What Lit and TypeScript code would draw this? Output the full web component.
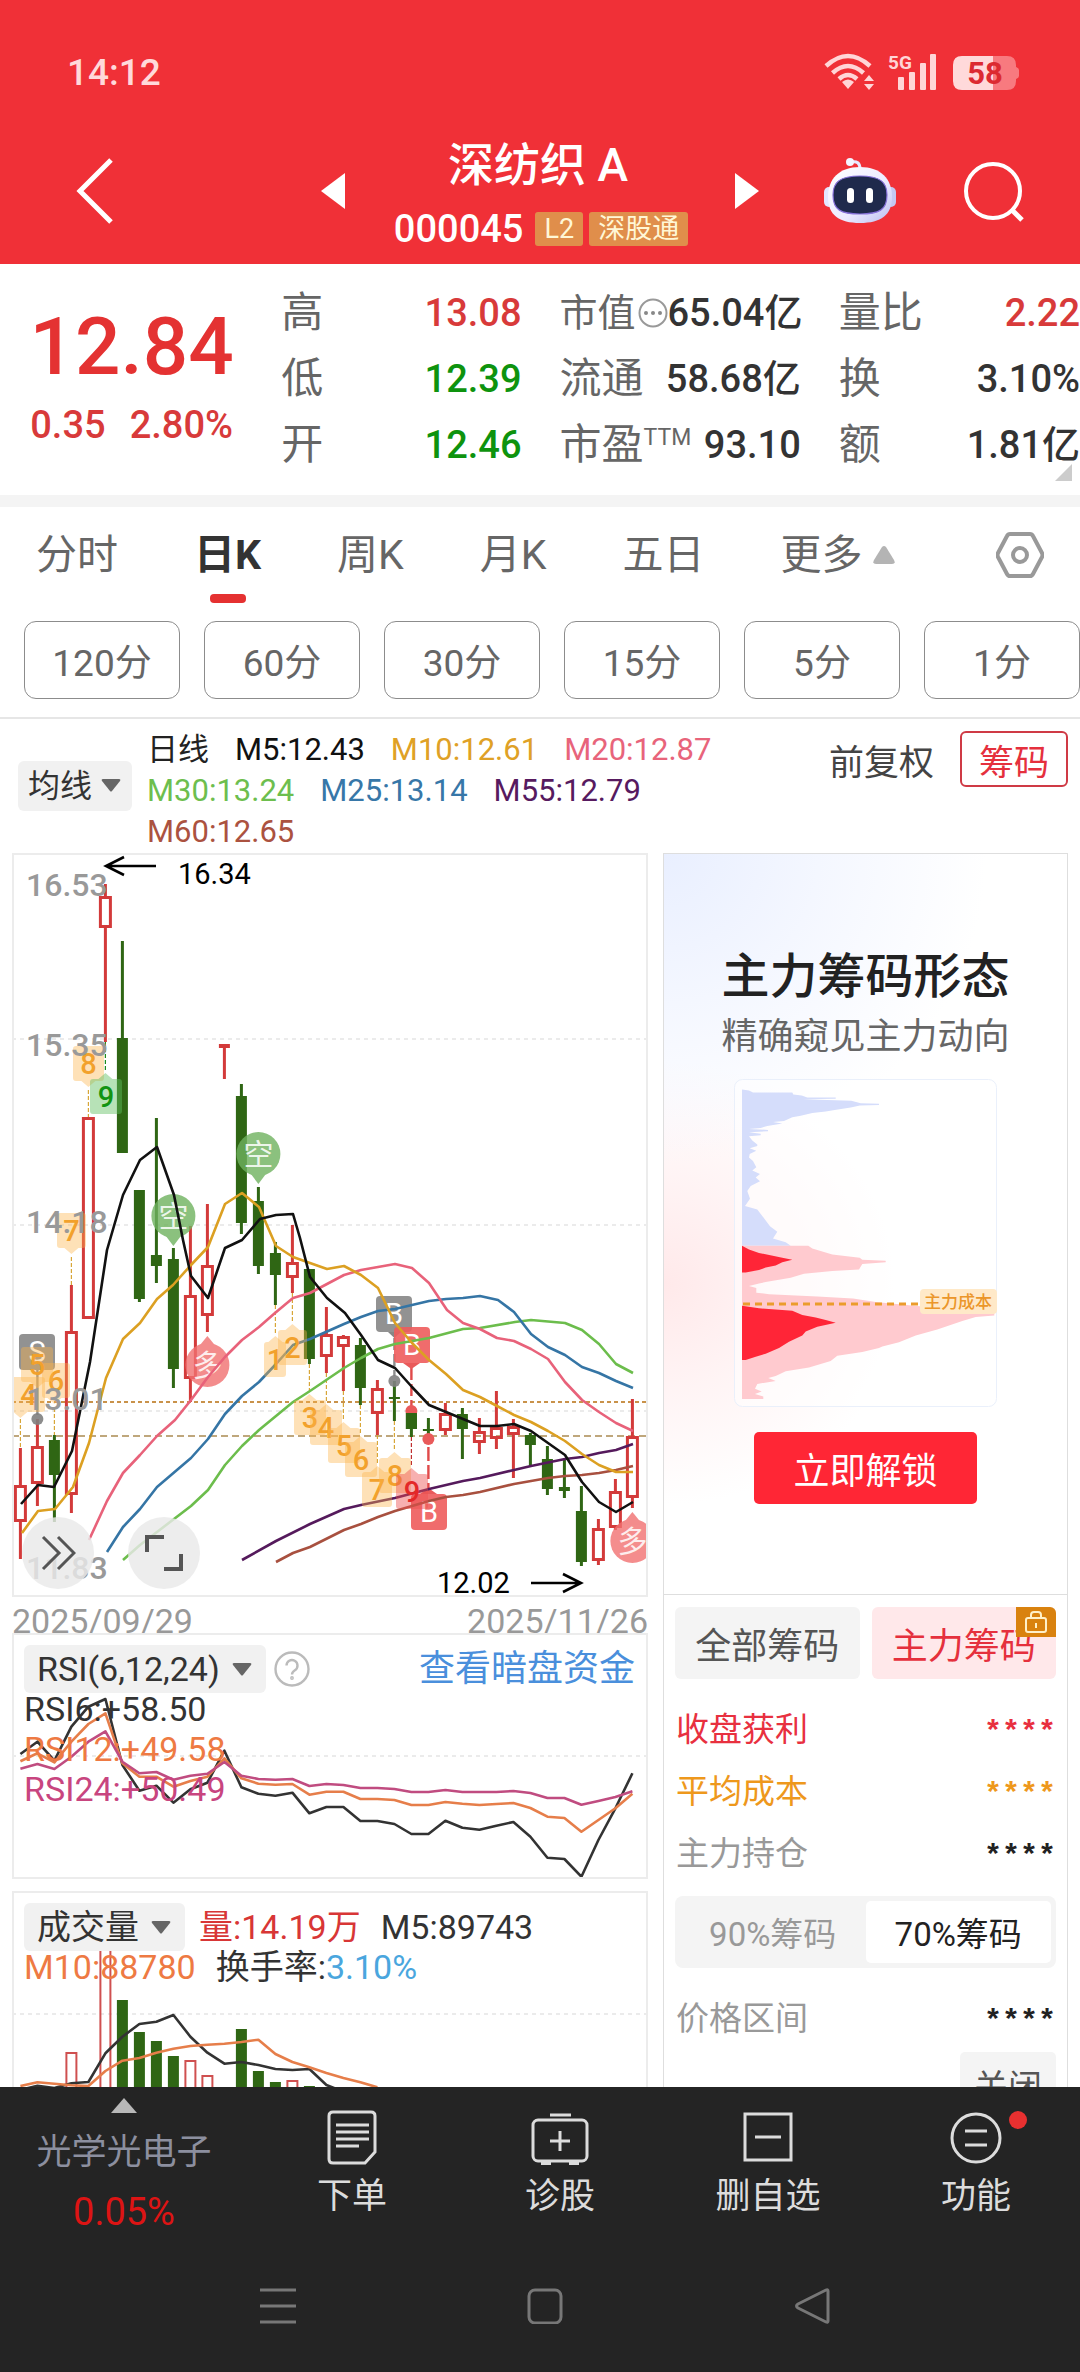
import { LitElement, html, svg, css } from "lit";
import { customElement, state } from "lit/decorators.js";
import { classMap } from "lit/directives/class-map.js";

const base = css`
  :host {
    display: block;
    font-family: Roboto, "Noto Sans CJK SC", sans-serif;
    color: #333;
  }
  * {
    box-sizing: border-box;
  }
  button,
  select {
    font: inherit;
    color: inherit;
    background: none;
    border: 0;
    padding: 0;
    margin: 0;
  }
  select {
    appearance: none;
  }
  svg {
    display: block;
  }
  .pill {
    position: relative;
    display: inline-flex;
    flex: none;
  }
  .pill select {
    height: 48px;
    padding: 0 46px 0 13px;
    border-radius: 6px;
    background: #f1f1f1;
    font-size: 34px;
    line-height: 48px;
    color: #333;
  }
  .pill svg {
    position: absolute;
    right: 14px;
    top: 18px;
    pointer-events: none;
  }
`;

const arrowDown = html`<svg width="20" height="13" viewBox="0 0 20 13" aria-hidden="true">
  <path d="M2 0H18Q20 0 19 2L11 12Q10 13 9 12L1 2Q0 0 2 0Z" fill="#666" />
</svg>`;

const STEP = 17;
const X0 = 20.4;
const RED = "#d33a3a";
const GREEN = "#2f6614";
const px = (i: number) => X0 + i * STEP;

/* u = rising (hollow red), d = falling (solid green): high, body top, body bottom, low */
type Candle = ["u" | "d", number, number, number, number];
const candles: Candle[] = [
  ["u", 1448, 1485, 1522, 1559], ["u", 1419, 1446, 1484, 1506], ["d", 1435, 1440, 1475, 1522],
  ["u", 1285, 1331, 1495, 1513], ["u", 1117, 1117, 1319, 1319], ["u", 884, 896, 928, 1042],
  ["d", 941, 1038, 1153, 1153], ["d", 1190, 1190, 1299, 1302], ["d", 1118, 1255, 1266, 1283],
  ["d", 1248, 1259, 1369, 1388], ["u", 1226, 1295, 1379, 1402], ["u", 1204, 1265, 1316, 1332],
  ["u", 1045, 1044, 1048, 1079], ["d", 1084, 1096, 1223, 1234], ["d", 1187, 1201, 1266, 1274],
  ["d", 1242, 1253, 1275, 1305], ["u", 1225, 1262, 1278, 1293], ["d", 1269, 1269, 1359, 1364],
  ["u", 1307, 1334, 1357, 1373], ["u", 1335, 1336, 1347, 1391], ["d", 1338, 1345, 1388, 1405],
  ["u", 1380, 1388, 1414, 1435], ["d", 1381, 1397, 1399, 1421], ["d", 1413, 1413, 1429, 1437],
  ["d", 1418, 1429, 1431, 1440], ["u", 1403, 1413, 1431, 1435], ["d", 1408, 1414, 1429, 1459],
  ["u", 1418, 1431, 1443, 1454], ["u", 1391, 1427, 1439, 1449], ["u", 1419, 1426, 1435, 1478],
  ["d", 1433, 1435, 1445, 1466], ["d", 1446, 1459, 1489, 1495], ["d", 1460, 1487, 1491, 1498],
  ["d", 1486, 1511, 1562, 1566], ["u", 1519, 1528, 1561, 1565], ["u", 1479, 1491, 1528, 1530],
  ["u", 1399, 1436, 1498, 1508],
];

const averages: { color: string; points: string }[] = [
  { color: "#551a5c", points: "242,1560 276,1541 310,1524 344,1509 361,1505 395,1498 429,1489 463,1481 480,1478 514,1470 531,1466 565,1459 582,1457 599,1453 616,1450 633,1444" },
  { color: "#a8503f", points: "276,1562 293,1553 310,1547 344,1530 361,1524 378,1517 395,1511 412,1506 429,1501 446,1497 463,1495 480,1492 514,1484 548,1478 565,1476 582,1475 599,1473 616,1470 633,1466" },
  { color: "#6cbd4c", points: "123,1560 140,1545 191,1506 208,1490 225,1465 242,1446 259,1430 293,1402 310,1391 344,1368 361,1358 378,1349 395,1344 429,1338 463,1329 480,1328 515,1322 531,1320 565,1323 582,1330 599,1344 616,1364 633,1373" },
  { color: "#3575a5", points: "107,1552 123,1527 140,1509 157,1487 191,1458 208,1439 225,1414 242,1396 259,1382 276,1364 293,1345 310,1339 344,1324 361,1317 378,1311 395,1309 429,1301 446,1299 463,1298 480,1296 498,1300 514,1312 531,1334 548,1347 565,1355 582,1367 599,1373 616,1381 633,1388" },
  { color: "#e8627a", points: "89,1540 107,1501 123,1473 140,1455 157,1436 175,1420 191,1400 208,1377 225,1357 242,1340 259,1327 275,1313 293,1298 310,1293 327,1284 344,1275 361,1270 395,1264 412,1268 429,1283 447,1310 463,1323 480,1329 497,1338 514,1341 531,1349 548,1359 565,1382 582,1400 599,1412 616,1423 633,1431" },
  { color: "#dca022", points: "22,1533 38,1511 55,1509 73,1487 89,1443 106,1378 123,1339 140,1323 157,1299 173,1285 191,1265 208,1247 225,1204 242,1193 259,1207 276,1246 293,1257 310,1263 327,1269 344,1266 361,1275 378,1288 395,1323 412,1343 429,1360 446,1374 463,1390 480,1397 497,1406 514,1415 531,1422 548,1431 565,1441 582,1454 599,1465 616,1472 633,1472" },
  { color: "#111", points: "21,1504 38,1485 54,1487 72,1451 90,1362 107,1250 123,1195 140,1160 157,1147 174,1195 183,1240 191,1276 208,1298 225,1248 242,1240 260,1219 276,1215 293,1214 300,1238 310,1277 327,1298 345,1313 361,1335 378,1360 395,1368 412,1387 429,1405 446,1412 463,1419 480,1426 497,1426 514,1424 531,1431 548,1443 565,1455 582,1482 599,1502 616,1512 633,1502" },
];

/* label, candle index, left, top, width, direction of the tip, colour scheme */
type Tag = [string, number, number, number, number, "up" | "down", "o" | "g" | "r"];
const tags: Tag[] = [
  ["4", 0, 12, 1377, 33, "down", "o"], ["6", 2, 42, 1363, 28, "down", "o"],
  ["5", 1, 21, 1347, 32, "down", "o"], ["7", 3, 57, 1213, 29, "down", "o"],
  ["8", 4, 73, 1046, 31, "down", "o"], ["9", 5, 90, 1079, 32, "up", "g"],
  ["1", 15, 264, 1342, 22, "up", "o"], ["2", 16, 278, 1330, 29, "up", "o"],
  ["3", 17, 294, 1400, 32, "up", "o"], ["4", 18, 310, 1410, 32, "up", "o"],
  ["5", 19, 328, 1428, 32, "up", "o"], ["6", 20, 345, 1442, 32, "up", "o"],
  ["7", 21, 362, 1472, 30, "up", "o"], ["8", 22, 379, 1458, 32, "up", "o"],
  ["9", 23, 396, 1474, 32, "up", "r"],
];
const tagFill = { o: "#fdb44c", g: "#5fbf5f", r: "#ee5050" };
const tagText = { o: "#f2a12c", g: "#129412", r: "#e42828" };

/* candle index, from, to, colour */
const leaders: [number, number, number, string][] = [
  [0, 1419, 1448, "#d8a638"], [2, 1408, 1435, "#d8a638"], [3, 1257, 1285, "#d8a638"],
  [4, 1090, 1117, "#d8a638"], [5, 1042, 1070, "#1c8a1c"], [15, 1305, 1334, "#d8a638"],
  [16, 1293, 1323, "#d8a638"], [17, 1364, 1394, "#d8a638"], [18, 1373, 1403, "#d8a638"],
  [19, 1391, 1421, "#d8a638"], [20, 1405, 1435, "#d8a638"], [21, 1435, 1465, "#d8a638"],
  [22, 1421, 1451, "#d8a638"], [23, 1437, 1467, "#c03030"],
];

const series = (values: number[]) => values.map((v, i) => `${px(i)},${(1590 + v / 3).toFixed(1)}`).join(" ");
const rsi = [
  { color: "#333", points: series([492, 455, 512, 410, 350, 327, 525, 602, 587, 638, 598, 578, 482, 592, 611, 617, 608, 670, 651, 651, 693, 693, 702, 732, 732, 692, 713, 719, 707, 696, 740, 803, 807, 860, 750, 655, 550]) },
  { color: "#e67e4a", points: series([514, 490, 517, 455, 402, 370, 520, 560, 560, 590, 573, 560, 505, 565, 581, 584, 582, 614, 605, 605, 627, 627, 630, 645, 645, 636, 641, 645, 642, 639, 654, 680, 684, 725, 690, 655, 611]) },
  { color: "#c04c80", points: series([536, 522, 537, 500, 455, 424, 515, 550, 546, 569, 557, 551, 516, 557, 567, 569, 567, 588, 582, 585, 594, 594, 597, 606, 606, 600, 606, 606, 606, 603, 609, 624, 624, 644, 633, 621, 604]) },
];
const volumeLines = [
  { color: "#333", points: series([1500, 1487, 1494, 1480, 1476, 1390, 1340, 1302, 1295, 1275, 1340, 1388, 1421, 1416, 1425, 1437, 1440, 1437, 1485, 1505]) },
  { color: "#e67e4a", points: series([1488, 1477, 1481, 1486, 1488, 1443, 1412, 1404, 1388, 1376, 1368, 1364, 1361, 1356, 1349, 1392, 1416, 1432, 1449, 1464, 1477, 1492]) },
];
const volumes: [number, "u" | "d", number][] = [
  [3, "u", 2053], [5, "u", 1946], [6, "d", 2000], [7, "d", 2032], [8, "d", 2041], [9, "d", 2056],
  [10, "u", 2061], [11, "u", 2076], [13, "d", 2029], [14, "d", 2071], [15, "d", 2082], [16, "u", 2081], [17, "d", 2086],
];

@customElement("k-charts")
class KCharts extends LitElement {
  static styles = [
    base,
    css`
      .panel {
        position: relative;
        border: 2px solid #ececec;
        background: #fff;
      }
      .panel > svg {
        width: 100%;
        height: auto;
      }
      .dates {
        display: flex;
        justify-content: space-between;
        padding-top: 12px;
        font-size: 34px;
        line-height: 24px;
        color: #999;
      }
      .panel + .panel {
        margin-top: 12px;
      }
      .round {
        position: absolute;
        left: 8px;
        bottom: 6px;
        display: flex;
        gap: 34px;
      }
      .round button {
        display: grid;
        place-items: center;
        width: 72px;
        height: 72px;
        border-radius: 50%;
        background: rgba(233, 233, 233, 0.82);
      }
      .over {
        position: absolute;
        inset: 10px 11px auto 10px;
        font-size: 34px;
        line-height: 40px;
        color: #333;
      }
      .head {
        display: flex;
        align-items: center;
        height: 48px;
        gap: 8px;
        margin-bottom: -4px;
      }
      .vol .head {
        gap: 14px;
      }
      .head a {
        margin-left: auto;
        font-size: 36px;
        color: #4a8fdc;
        text-decoration: none;
      }
      .line {
        display: flex;
        gap: 20px;
      }
      .orange {
        color: #ee7a43;
      }
      .magenta {
        color: #c8457f;
      }
      .red {
        color: #d83636;
      }
      .m5 {
        margin-left: 6px;
      }
      .blue {
        color: #4aa6de;
      }
    `,
  ];

  private candle(c: Candle, i: number) {
    const x = px(i);
    const [kind, high, top, bottom, low] = c;
    if (kind === "d") {
      return svg`<g fill=${GREEN}>
        <rect x=${x - 1.5} y=${high} width="3" height=${low - high} />
        <rect x=${x - 5.5} y=${top} width="11" height=${bottom - top} />
      </g>`;
    }
    const hollow = bottom - top > 5;
    return svg`<g fill=${RED}>
      <rect x=${x - 1.5} y=${high} width="3" height=${Math.max(top - high, 0)} />
      <rect x=${x - 1.5} y=${bottom} width="3" height=${low - bottom} />
      ${hollow
        ? svg`<rect x=${x - 5} y=${top + 1.5} width="10" height=${bottom - top - 3} fill="none" stroke=${RED} stroke-width="3" />`
        : svg`<rect x=${x - 5.5} y=${top} width="11" height=${bottom - top} />`}
    </g>`;
  }

  private tag([label, i, left, top, width, tip, tone]: Tag) {
    const x = px(i);
    const h = 35;
    const bottom = top + h;
    const path =
      tip === "up"
        ? `M${left + 3} ${top}H${x - 7}L${x} ${top - 6}L${x + 7} ${top}H${left + width - 3}q3 0 3 3V${bottom - 3}q0 3 -3 3H${left + 3}q-3 0 -3 -3V${top + 3}q0 -3 3 -3Z`
        : `M${left + 3} ${top}H${left + width - 3}q3 0 3 3V${bottom - 3}q0 3 -3 3H${x + 7}L${x} ${bottom + 6}L${x - 7} ${bottom}H${left + 3}q-3 0 -3 -3V${top + 3}q0 -3 3 -3Z`;
    return svg`<path d=${path} fill=${tagFill[tone]} fill-opacity=${tone === "o" ? 0.4 : 0.45} />
      <text x=${left + width / 2} y=${top + 28} font-size="29" font-weight="500" text-anchor="middle" fill=${tagText[tone]}>${label}</text>`;
  }

  private trade(label: string, left: number, top: number, fill: string) {
    return svg`<rect x=${left} y=${top} width="36" height="36" rx="4" fill=${fill} fill-opacity="0.9" />
      <text x=${left + 18} y=${top + 28} font-size="29" text-anchor="middle" fill="#fff">${label}</text>`;
  }

  private bubble(label: string, x: number, y: number, up: boolean, fill: string) {
    const d = up ? `M${x - 9} ${y - 18}L${x} ${y - 29}L${x + 9} ${y - 18}Z` : `M${x - 9} ${y + 18}L${x} ${y + 30}L${x + 9} ${y + 18}Z`;
    return svg`<g opacity="0.8"><circle cx=${x} cy=${y} r="22" fill=${fill} /><path d=${d} fill=${fill} /></g>
      <text x=${x} y=${y + 11} font-size="30" text-anchor="middle" fill="#fff" fill-opacity="0.85">${label}</text>`;
  }

  private grid(y: number) {
    return svg`<line x1="12" x2="648" y1=${y} y2=${y} stroke="#ebebeb" stroke-width="2" stroke-dasharray="4 4" />`;
  }

  private lines(list: { color: string; points: string }[]) {
    return list.map(
      (l) => svg`<polyline points=${l.points} fill="none" stroke=${l.color} stroke-width="2.6" stroke-linejoin="round" />`,
    );
  }

  private priceChart() {
    const prices: [string, number][] = [["16.53", 896], ["15.35", 1056], ["14.18", 1233], ["13.01", 1410], ["11.83", 1579]];
    return html`<svg viewBox="14 855 632 740" role="img" aria-label="日K线图">
      ${[1039, 1225, 1411].map((y) => this.grid(y))}
      <line x1="12" x2="648" y1="1402" y2="1402" stroke="#c9924a" stroke-width="2" stroke-dasharray="4 3" />
      <line x1="12" x2="648" y1="1436" y2="1436" stroke="#bfa77c" stroke-width="2" stroke-dasharray="7 4" />
      ${candles.map((c, i) => this.candle(c, i))}
      ${leaders.map(([i, a, b, color]) => svg`<line x1=${px(i)} x2=${px(i)} y1=${a} y2=${b} stroke=${color} stroke-width="1.2" stroke-dasharray="4 2" />`)}
      ${this.trade("S", 19, 1334, "#868686")}
      ${this.trade("B", 376, 1296, "#868686")}
      <path d="M388 1332H401L394.4 1338Z" fill="#868686" />
      <g stroke="#8c8c8c" stroke-width="2.4">
        <line x1="37.4" x2="37.4" y1="1370" y2="1415" />
        <line x1="394.4" x2="394.4" y1="1338" y2="1376" stroke-dasharray="12 4" />
      </g>
      <g fill="#808080" fill-opacity="0.9">
        <circle cx="37.4" cy="1419" r="6" />
        <circle cx="394.4" cy="1381" r="6" />
      </g>
      <g stroke="#e04a4a" stroke-width="2.4">
        <line x1="411.4" x2="411.4" y1="1368" y2="1408" stroke-dasharray="12 4" />
        <line x1="428.4" x2="428.4" y1="1447" y2="1490" stroke-dasharray="14 4" />
      </g>
      <g fill="#e95a5a">
        <circle cx="411.4" cy="1411" r="6" />
        <circle cx="428.4" cy="1439" r="6" />
        <path d="M403 1363H420L411.4 1369Z" />
        <path d="M420 1494H437L428.4 1488Z" />
      </g>
      <rect x="405.9" y="1413" width="11" height="16" fill=${GREEN} />
      ${this.trade("B", 394, 1327, "#ee5c5c")}
      ${this.trade("B", 411, 1494, "#ee5c5c")}
      ${this.bubble("空", px(14), 1154, false, "#6fb25f")}
      ${this.bubble("空", px(9), 1216, false, "#6fb25f")}
      ${this.bubble("多", px(11), 1365, true, "#f17070")}
      ${this.bubble("多", px(36), 1541, true, "#f17070")}
      ${this.lines(averages)}
      ${tags.map((t) => this.tag(t))}
      <g font-size="32" font-weight="500" fill="#999">
        ${prices.map(([p, y]) => svg`<text x="26" y=${y}>${p}</text>`)}
      </g>
      <g font-size="29" fill="#000">
        <text x="178" y="884">16.34</text>
        <text x="437" y="1593">12.02</text>
      </g>
      <g fill="none" stroke="#000" stroke-width="2.6">
        <path d="M156 866H106M124 857L106 866L124 875" />
        <path d="M531 1583H580M563 1574L581 1583L563 1592" />
      </g>
    </svg>`;
  }

  render() {
    return html`
      <section class="panel">
        ${this.priceChart()}
        <div class="round">
          <button aria-label="展开">
            <svg width="36" height="36" viewBox="0 0 36 36" fill="none" stroke="#555" stroke-width="3">
              <path d="M3 2L19 18L3 34M18 2L34 18L18 34" />
            </svg>
          </button>
          <button aria-label="全屏">
            <svg width="38" height="38" viewBox="0 0 38 38" fill="none" stroke="#555" stroke-width="4">
              <path d="M2 18V3H19M36 20V35H19" />
            </svg>
          </button>
        </div>
      </section>
      <div class="dates"><span>2025/09/29</span><span>2025/11/26</span></div>
      <section class="panel">
        <svg viewBox="14 1635 632 242" role="img" aria-label="RSI">
          ${this.grid(1756)} ${this.lines(rsi)}
        </svg>
        <div class="over">
          <div class="head">
            <label class="pill"><select aria-label="副图指标"><option>RSI(6,12,24)</option></select>${arrowDown}</label>
            <button aria-label="指标说明">
              <svg width="36" height="36" viewBox="0 0 36 36" fill="none" stroke="#bbb" stroke-width="2.4">
                <circle cx="18" cy="18" r="16.5" />
                <path d="M12.5 14.5a5.5 5.5 0 1 1 8.4 4.7q-2.9 1.8-2.9 4.3" />
                <circle cx="18" cy="27" r="0.7" />
              </svg>
            </button>
            <a href="#dark">查看暗盘资金</a>
          </div>
          <div>RSI6:+58.50</div>
          <div class="orange">RSI12:+49.58</div>
          <div class="magenta">RSI24:+50.49</div>
        </div>
      </section>
      <section class="panel vol">
        <svg viewBox="14 1893 632 242" role="img" aria-label="成交量图">
          ${this.grid(2014)}
          ${volumes.map(([i, kind, y]) =>
            kind === "d"
              ? svg`<rect x=${px(i) - 5.5} y=${y} width="11" height=${2135 - y} fill=${GREEN} />`
              : svg`<rect x=${px(i) - 5} y=${y} width="10" height=${2135 - y} fill="none" stroke="#cf5050" stroke-width="2" />`,
          )}
          ${this.lines(volumeLines)}
        </svg>
        <div class="over">
          <div class="head">
            <label class="pill"><select aria-label="成交指标"><option>成交量</option></select>${arrowDown}</label>
            <span class="red">量:14.19万</span>
            <span class="m5">M5:89743</span>
          </div>
          <div class="line">
            <span class="orange">M10:88780</span>
            <span>换手率:<span class="blue">3.10%</span></span>
          </div>
        </div>
      </section>
    `;
  }
}

const scaled = (pts: [number, number][]) =>
  pts.map(([x, y]) => `${(650 + x / 3 - 735).toFixed(1)},${(840 + y / 2.063 - 1079).toFixed(1)}`).join(" ");

const blueChips = scaled([
  [279, 515], [300, 517], [312, 521], [430, 521], [433, 525], [458, 527], [475, 531], [560, 531], [560, 534], [462, 535], [607, 538],
  [635, 543], [690, 544], [690, 547], [633, 548], [605, 552], [557, 557], [530, 560], [490, 563], [455, 569], [430, 572], [405, 580],
  [372, 582], [400, 585], [355, 590], [335, 594], [300, 596], [357, 598], [357, 601], [300, 603], [335, 606], [335, 609], [300, 611],
  [310, 620], [325, 628], [325, 631], [302, 636], [322, 641], [302, 648], [300, 655], [312, 662], [322, 675], [310, 682], [333, 689],
  [320, 696], [333, 704], [305, 714], [295, 724], [303, 740], [288, 755], [325, 762], [350, 785], [363, 797], [385, 808], [372, 822],
  [410, 830], [425, 837], [279, 837],
]);
const pinkChips = scaled([
  [279, 837], [478, 837], [490, 843], [550, 855], [632, 862], [640, 866], [710, 868], [710, 871], [640, 875], [630, 886], [550, 889],
  [465, 895], [425, 903], [350, 912], [330, 915], [300, 920], [322, 924], [322, 934], [360, 937], [505, 942], [612, 946], [680, 953],
  [812, 962], [1036, 974], [1036, 981], [980, 984], [940, 992], [865, 1010], [800, 1022], [750, 1036], [700, 1045], [690, 1048], [640, 1056],
  [565, 1064], [545, 1075], [480, 1088], [410, 1096], [380, 1106], [358, 1110], [380, 1116], [325, 1122], [318, 1132], [338, 1138],
  [318, 1143], [343, 1148], [343, 1153], [279, 1153],
]);
const redChips = [
  scaled([[279, 837], [300, 845], [330, 852], [375, 858], [400, 862], [430, 866], [400, 871], [380, 878], [350, 882], [330, 887], [290, 892], [279, 892]]),
  scaled([[279, 961], [330, 966], [430, 971], [460, 980], [500, 985], [530, 990], [560, 996], [505, 1004], [470, 1014], [460, 1022], [420, 1035], [390, 1048], [350, 1060], [320, 1066], [290, 1073], [279, 1073]]),
];

@customElement("chip-panel")
class ChipPanel extends LitElement {
  @state() private share = "70%筹码";

  static styles = [
    base,
    css`
      :host {
        border: 1px solid #dedede;
      }
      .promo {
        display: flex;
        flex-direction: column;
        align-items: center;
        padding: 93px 10px 90px;
        border-bottom: 1px solid #dedede;
        background:
          radial-gradient(ellipse 80% 42% at 0% 0%, #e9efff 0%, rgba(240, 244, 255, 0.7) 50%, rgba(255, 255, 255, 0) 100%),
          radial-gradient(ellipse 60% 30% at 0% 58%, #ffe9ea 0%, rgba(255, 240, 241, 0.7) 50%, rgba(255, 255, 255, 0) 100%),
          #fff;
      }
      h2 {
        margin: 0 0 8px;
        font-size: 48px;
        line-height: 60px;
        font-weight: 500;
        color: #222;
        white-space: nowrap;
      }
      p {
        margin: 0 0 20px;
        font-size: 36px;
        line-height: 44px;
        color: #666;
        white-space: nowrap;
      }
      .unlock {
        width: 223px;
        height: 72px;
        margin-top: 25px;
        border-radius: 5px;
        background: #ff2635;
        color: #fff;
        font-size: 36px;
      }
      .body {
        padding: 12px 11px;
      }
      .tabs {
        display: grid;
        grid-template-columns: 1fr 1fr;
        gap: 12px;
        margin-bottom: 17px;
      }
      .tabs button {
        position: relative;
        height: 72px;
        border-radius: 6px;
        background: #f4f4f4;
        color: #555;
        font-size: 36px;
        white-space: nowrap;
        overflow: hidden;
      }
      .tabs .on {
        background: #ffe8ea;
        color: #e5303d;
      }
      .lock {
        position: absolute;
        top: 0;
        right: 0;
        padding: 3px 9px;
        background: #d9820f;
      }
      .row {
        display: flex;
        justify-content: space-between;
        align-items: center;
        height: 62px;
        padding-left: 1px;
        font-size: 33px;
        color: #999;
      }
      .stars {
        font-family: "Liberation Mono", monospace;
        font-weight: 700;
        font-size: 30px;
        padding-top: 12px;
        color: #222;
      }
      .gain,
      .gain .stars {
        color: #e8303f;
      }
      .cost,
      .cost .stars {
        color: #ee981c;
      }
      .seg {
        display: grid;
        grid-template-columns: 1fr 1fr;
        height: 72px;
        margin: 14px 0 17px;
        padding: 5px;
        border-radius: 8px;
        background: #f4f4f4;
      }
      .seg button {
        border-radius: 5px;
        font-size: 33px;
        color: #999;
        white-space: nowrap;
      }
      .seg .on {
        background: #fff;
        color: #222;
      }
      .close {
        display: block;
        width: 96px;
        height: 64px;
        margin: 5px 0 0 auto;
        border-radius: 5px;
        background: #f4f4f4;
        color: #555;
        font-size: 34px;
      }
    `,
  ];

  private row(label: string, tone = "") {
    return html`<div class="row ${tone}"><span>${label}</span><span class="stars">****</span></div>`;
  }

  render() {
    return html`
      <div class="promo">
        <h2>主力筹码形态</h2>
        <p>精确窥见主力动向</p>
        <svg width="263" height="328" viewBox="0 0 263 328" role="img" aria-label="筹码分布">
          <rect x="0.5" y="0.5" width="262" height="327" rx="8" fill="#fff" fill-opacity="0.55" stroke="#eaf0fb" />
          <polygon points=${blueChips} fill="#d5ddfb" />
          <polygon points=${pinkChips} fill="#ffcacf" />
          ${redChips.map((p) => svg`<polygon points=${p} fill="#ff2537" />`)}
          <line x1="9" x2="186" y1="225" y2="225" stroke="#eb9c2c" stroke-width="3" stroke-dasharray="7 5" />
          <rect x="186" y="210" width="77" height="25" rx="4" fill="#ffe9c8" />
          <text x="224" y="229" font-size="17" font-weight="500" text-anchor="middle" fill="#eb962a">主力成本</text>
        </svg>
        <button class="unlock">立即解锁</button>
      </div>
      <div class="body">
        <div class="tabs">
          <button>全部筹码</button>
          <button class="on">
            主力筹码
            <span class="lock">
              <svg width="22" height="24" viewBox="0 0 22 24" fill="none" stroke="#fff0c8" stroke-width="2">
                <rect x="1" y="8" width="20" height="14" rx="2" />
                <path d="M6 8V5a3 3 0 0 1 3-3h4a3 3 0 0 1 3 3V8M11 13V18" />
              </svg>
            </span>
          </button>
        </div>
        ${this.row("收盘获利", "gain")} ${this.row("平均成本", "cost")} ${this.row("主力持仓")}
        <div class="seg">
          ${["90%筹码", "70%筹码"].map(
            (s) => html`<button class=${classMap({ on: s === this.share })} @click=${() => (this.share = s)}>${s}</button>`,
          )}
        </div>
        ${this.row("价格区间")}
        <button class="close">关闭</button>
      </div>
    `;
  }
}

@customElement("app-root")
class AppRoot extends LitElement {
  @state() private period = "日K";

  static styles = [
    base,
    css`
      :host {
        display: flex;
        flex-direction: column;
        height: 100vh;
        background: #fff;
        overflow: hidden;
      }
      header {
        flex: none;
        background: #f03037;
        color: #fff;
      }
      .status {
        display: flex;
        align-items: center;
        height: 128px;
        padding: 16px 61px 0 67px;
        font-size: 37px;
        font-weight: 500;
        color: #ffd9da;
      }
      .status svg {
        margin-left: auto;
      }
      .title {
        display: grid;
        grid-template-columns: minmax(0, 1fr) auto minmax(0, 1fr);
        align-items: center;
        height: 136px;
        padding-top: 2px;
      }
      .title > div {
        display: flex;
        align-items: center;
      }
      .title button {
        padding-bottom: 12px;
      }
      .back {
        padding-left: 76px;
      }
      .name {
        width: 390px;
        padding-right: 4px;
        text-align: center;
      }
      h1 {
        margin: 0;
        font-size: 46px;
        line-height: 64px;
        font-weight: 500;
      }
      .code {
        display: flex;
        justify-content: center;
        align-items: center;
        gap: 6px;
        padding-left: 6px;
        font-size: 38px;
        line-height: 64px;
        font-weight: 500;
      }
      .badge {
        padding: 0 9px;
        border-radius: 3px;
        background: #e08e4b;
        color: #fff7d6;
        font-size: 27px;
        line-height: 34px;
        font-weight: 400;
      }
      .code > :first-child {
        margin-right: 6px;
      }
      .tools {
        justify-content: flex-end;
        gap: 67px;
        padding-right: 54px;
      }
      .quote {
        position: relative;
        flex: none;
        display: grid;
        grid-template-columns: minmax(0, 243fr) minmax(0, 240fr) minmax(0, 241fr) minmax(0, 241fr);
        column-gap: 38px;
        padding: 16px 0 17px;
        border-bottom: 12px solid #f4f4f4;
      }
      .last {
        padding: 28px 0 0 20px;
        text-align: center;
        font-weight: 500;
        color: #d83a3a;
      }
      .price {
        font-size: 80px;
        line-height: 78px;
        color: #e43232;
      }
      .delta {
        display: flex;
        justify-content: center;
        gap: 24px;
        font-size: 38px;
        line-height: 78px;
      }
      .cell {
        display: flex;
        justify-content: space-between;
        align-items: center;
        font-size: 42px;
        line-height: 66px;
        height: 66px;
        color: #666;
        white-space: nowrap;
      }
      .cell b {
        font-size: 38px;
        font-weight: 500;
        color: #333;
      }
      .cell .small {
        font-size: 38px;
        display: flex;
        align-items: center;
        gap: 2px;
      }
      .cell sup {
        font-size: 23px;
        line-height: 24px;
        vertical-align: 14px;
      }
      .cell .up {
        color: #d83a3a;
      }
      .cell .down {
        color: #0e930e;
      }
      .corner {
        position: absolute;
        right: 8px;
        bottom: 14px;
      }
      .periods {
        flex: none;
        display: flex;
        align-items: flex-start;
        padding: 18px 36px 0;
        height: 114px;
        font-size: 41px;
        line-height: 60px;
        color: #666;
      }
      .periods button {
        display: flex;
        align-items: center;
        gap: 10px;
        margin-right: 76px;
        white-space: nowrap;
      }
      .periods .on {
        position: relative;
        font-weight: 700;
        color: #333;
      }
      .periods .on::after {
        content: "";
        position: absolute;
        left: 50%;
        bottom: -18px;
        width: 36px;
        height: 9px;
        margin-left: -18px;
        border-radius: 4px;
        background: #e53131;
      }
      .periods .gear {
        height: 60px;
        margin: 0 0 0 auto;
      }
      .minutes {
        flex: none;
        display: grid;
        grid-template-columns: repeat(6, minmax(0, 1fr));
        gap: 24px;
        padding: 0 0 18px 24px;
        border-bottom: 2px solid #e6e6e6;
      }
      .minutes button {
        height: 78px;
        border: 1px solid #8c8c8c;
        border-radius: 12px;
        font-size: 37px;
        color: #666;
      }
      .legend {
        flex: none;
        display: flex;
        align-items: center;
        height: 134px;
        padding: 0 12px 0 18px;
      }
      .legend .pill select {
        height: 50px;
        padding: 0 38px 0 10px;
        font-size: 32px;
        width: 114px;
      }
      .legend .pill svg {
        right: 11px;
      }
      .ma {
        flex: 1;
        display: flex;
        flex-wrap: wrap;
        column-gap: 26px;
        margin: 8px 60px 0 15px;
        font-size: 31px;
        line-height: 41px;
      }
      .side {
        align-self: flex-start;
        display: flex;
        align-items: center;
        gap: 26px;
        padding-top: 12px;
        font-size: 35px;
        color: #444;
      }
      .side .chip {
        width: 108px;
        height: 56px;
        border: 2px solid #cf3a45;
        border-radius: 6px;
        color: #e5303d;
      }
      .m0 { color: #222; }
      .m5 { color: #111; }
      .m10 { color: #dfa126; }
      .m20 { color: #e8647b; }
      .m30 { color: #6dbe4e; }
      .m25 { color: #3777a8; }
      .m55 { color: #571a5f; }
      .m60 { color: #ab5240; }
      main {
        flex: 1 1 0;
        min-height: 0;
        overflow: hidden;
        display: grid;
        grid-template-columns: minmax(0, 636fr) minmax(0, 405fr);
        align-items: start;
        gap: 15px;
        padding: 0 12px;
      }
      footer {
        flex: none;
        background: #242424;
        color: #dcdcdc;
      }
      .nav {
        display: grid;
        grid-template-columns: 248fr repeat(4, 208fr);
        height: 160px;
        font-size: 35px;
      }
      .nav button {
        position: relative;
        display: flex;
        flex-direction: column;
        align-items: center;
        padding-top: 20px;
        line-height: 48px;
      }
      .nav button svg {
        margin-bottom: 6px;
      }
      .nav .sector {
        padding-top: 11px;
        color: #8c8f9f;
      }
      .nav .sector svg {
        margin-bottom: 16px;
      }
      .rate {
        margin-top: 11px;
        font-size: 38px;
        color: #dd1414;
      }
      .dot {
        position: absolute;
        top: 24px;
        left: calc(50% + 33px);
        width: 18px;
        height: 18px;
        border-radius: 50%;
        background: #e83030;
      }
      .system {
        display: flex;
        justify-content: space-between;
        align-items: flex-start;
        height: 125px;
        padding: 41px 250px 0 260px;
      }
    `,
  ];

  private cell(label: unknown, value: string, tone = "") {
    return html`<div class="cell"><span>${label}</span><b class=${tone}>${value}</b></div>`;
  }

  render() {
    return html`
      <header>
        <div class="status">
          <span>14:12</span>
          <svg width="195" height="40" viewBox="0 0 195 40" role="img" aria-label="5G 58%">
            <g fill="none" stroke="#ffd5d7" stroke-width="4.500">
              <path d="M2 14Q24 -6 46 14" />
              <path d="M8.500 21Q24 7 39.500 21" />
              <path d="M15 27Q24 19 33 27" />
            </g>
            <path d="M18 30Q24 25 30 30L24 37Z" fill="#ffd5d7" />
            <path d="M45 23L50 29H40ZM45 38L50 32H40Z" fill="#ffd5d7" />
            <text x="64" y="17" font-size="19" font-weight="700" fill="#ffd5d7">5G</text>
            <g fill="#ffd5d7">
              <rect x="74" y="25" width="6" height="13" rx="1" />
              <rect x="85" y="20" width="6" height="18" rx="1" />
              <rect x="96" y="11" width="6" height="27" rx="1" />
              <rect x="106" y="2" width="6" height="36" rx="1" />
            </g>
            <path d="M138 4H169V38H138Q129 38 129 29V13Q129 4 138 4Z" fill="#ffd9da" />
            <path d="M169 4H183Q192 4 192 13V15Q195 16 195 18V24Q195 26 192 27V29Q192 38 183 38H169Z" fill="#f87a7f" />
            <text x="161" y="32" font-size="31" font-weight="700" text-anchor="middle" fill="#dc2a31">58</text>
          </svg>
        </div>
        <div class="title">
          <div class="back">
            <button aria-label="返回">
              <svg width="38" height="66" viewBox="0 0 38 66" fill="none" stroke="#fff" stroke-width="5">
                <path d="M35 2L4 33L35 64" />
              </svg>
            </button>
          </div>
          <div class="stock">
            <button aria-label="上一只">
              <svg width="24" height="36" viewBox="0 0 24 36"><path d="M24 0V36L0 18Z" fill="#fff" /></svg>
            </button>
            <div class="name">
              <h1>深纺织 A</h1>
              <div class="code"><span>000045</span><span class="badge">L2</span><span class="badge">深股通</span></div>
            </div>
            <button aria-label="下一只">
              <svg width="24" height="36" viewBox="0 0 24 36"><path d="M0 0V36L24 18Z" fill="#fff" /></svg>
            </button>
          </div>
          <div class="tools">
            <button aria-label="智能助手">
              <svg width="74" height="68" viewBox="0 0 74 68">
                <defs>
                  <linearGradient id="head" x1="0" y1="0" x2="1" y2="1">
                    <stop offset="0" stop-color="#ffffff" />
                    <stop offset="0.6" stop-color="#eceaff" />
                    <stop offset="1" stop-color="#b9bdf0" />
                  </linearGradient>
                </defs>
                <path d="M28 5Q37 3 37 12" fill="none" stroke="#e6e8ff" stroke-width="3" />
                <circle cx="27" cy="5" r="4" fill="#f4f4ff" />
                <rect x="1" y="30" width="10" height="20" rx="5" fill="#e4e6ff" />
                <rect x="63" y="30" width="10" height="20" rx="5" fill="#c4c8f2" />
                <path d="M37 10C58 10 69 22 69 40C69 58 58 66 37 66C16 66 5 58 5 40C5 22 16 10 37 10Z" fill="url(#head)" />
                <path d="M37 19C57 19 64 25 64 38C64 53 56 57 37 57C18 57 10 53 10 38C10 25 17 19 37 19Z" fill="#1f2a4c" stroke="#8570d8" stroke-width="1.200" />
                <rect x="24" y="31" width="7" height="15" rx="3.500" fill="#fff" />
                <rect x="43" y="31" width="7" height="15" rx="3.500" fill="#fff" />
              </svg>
            </button>
            <button aria-label="搜索">
              <svg width="62" height="62" viewBox="0 0 62 62" fill="none" stroke="#fff" stroke-width="4">
                <circle cx="29" cy="31" r="27" />
                <path d="M48 50L58 60" stroke-width="5" />
              </svg>
            </button>
          </div>
        </div>
      </header>

      <section class="quote">
        <div class="last">
          <div class="price">12.84</div>
          <div class="delta"><span>0.35</span><span>2.80%</span></div>
        </div>
        <div>${this.cell("高", "13.08", "up")} ${this.cell("低", "12.39", "down")} ${this.cell("开", "12.46", "down")}</div>
        <div>
          <div class="cell">
            <span class="small">市值
              <svg width="30" height="30" viewBox="0 0 30 30" fill="none" stroke="#999" stroke-width="2">
                <circle cx="15" cy="15" r="13.500" />
                <g fill="#888" stroke="none"><circle cx="8" cy="15" r="2" /><circle cx="15" cy="15" r="2" /><circle cx="22" cy="15" r="2" /></g>
              </svg>
            </span>
            <b>65.04亿</b>
          </div>
          ${this.cell("流通", "58.68亿")} ${this.cell(html`市盈<sup>TTM</sup>`, "93.10")}
        </div>
        <div>${this.cell("量比", "2.22", "up")} ${this.cell("换", "3.10%")} ${this.cell("额", "1.81亿")}</div>
        <svg class="corner" width="17" height="17" viewBox="0 0 17 17"><path d="M17 0V17H0Z" fill="#ccc" /></svg>
      </section>

      <nav class="periods">
        ${["分时", "日K", "周K", "月K", "五日"].map(
          (p) => html`<button class=${classMap({ on: p === this.period })} @click=${() => (this.period = p)}>${p}</button>`,
        )}
        <button>更多
          <svg width="22" height="18" viewBox="0 0 22 18"><path d="M11 0Q12 0 13 1L21 14Q23 18 19 18H3Q-1 18 1 14L9 1Q10 0 11 0Z" fill="#b4b4b4" /></svg>
        </button>
        <button class="gear" aria-label="设置">
          <svg width="48" height="46" viewBox="0 0 48 46" fill="none" stroke="#999" stroke-width="4">
            <path d="M14 2H34Q36 2 37 4L46 21Q47 23 46 25L37 42Q36 44 34 44H14Q12 44 11 42L2 25Q1 23 2 21L11 4Q12 2 14 2Z" />
            <circle cx="24" cy="23" r="7" />
          </svg>
        </button>
      </nav>
      <div class="minutes">
        ${["120分", "60分", "30分", "15分", "5分", "1分"].map((m) => html`<button>${m}</button>`)}
      </div>
      <div class="legend">
        <label class="pill"><select aria-label="主图指标"><option>均线</option></select>${arrowDown}</label>
        <div class="ma">
          <span class="m0">日线</span><span class="m5">M5:12.43</span><span class="m10">M10:12.61</span>
          <span class="m20">M20:12.87</span><span class="m30">M30:13.24</span><span class="m25">M25:13.14</span>
          <span class="m55">M55:12.79</span><span class="m60">M60:12.65</span>
        </div>
        <div class="side"><span>前复权</span><button class="chip">筹码</button></div>
      </div>

      <main>
        <k-charts></k-charts>
        <chip-panel></chip-panel>
      </main>

      <footer>
        <div class="nav">
          <button class="sector">
            <svg width="26" height="15" viewBox="0 0 26 15"><path d="M13 0L26 15H0Z" fill="#b8b8b8" /></svg>
            <span>光学光电子</span>
            <span class="rate">0.05%</span>
          </button>
          <button>
            <svg width="56" height="60" viewBox="0 0 56 60" fill="none" stroke="#dcdcdc" stroke-width="3">
              <path d="M9 5H47Q51 5 51 9V45L41 56H9Q5 56 5 52V9Q5 5 9 5Z" />
              <path d="M12 18H45M12 25H45M12 32H45M12 39H35" />
            </svg>
            <span>下单</span>
          </button>
          <button>
            <svg width="60" height="60" viewBox="0 0 60 60" fill="none" stroke="#dcdcdc" stroke-width="3">
              <rect x="3" y="13" width="54" height="41" rx="5" />
              <path d="M20 8H41" />
              <path d="M30 24V44M20 34H40" />
              <path d="M11 56H21M39 56H49" stroke-width="4" />
            </svg>
            <span>诊股</span>
          </button>
          <button>
            <svg width="56" height="60" viewBox="0 0 56 60" fill="none" stroke="#dcdcdc" stroke-width="3">
              <rect x="5" y="7" width="46" height="46" />
              <path d="M15 30H41" />
            </svg>
            <span>删自选</span>
          </button>
          <button>
            <svg width="56" height="60" viewBox="0 0 56 60" fill="none" stroke="#dcdcdc" stroke-width="3">
              <circle cx="28" cy="31" r="24" />
              <path d="M17 24H39M17 38H39" />
            </svg>
            <span>功能</span>
            <i class="dot"></i>
          </button>
        </div>
        <div class="system">
          <button aria-label="最近任务">
            <svg width="36" height="36" viewBox="0 0 36 36" stroke="#777" stroke-width="3"><path d="M0 2H36M0 18H36M0 34H36" /></svg>
          </button>
          <button aria-label="主屏幕">
            <svg width="36" height="36" viewBox="0 0 36 36" fill="none" stroke="#777" stroke-width="3"><rect x="2" y="2" width="32" height="33" rx="6" /></svg>
          </button>
          <button aria-label="后退">
            <svg width="36" height="36" viewBox="0 0 36 36" fill="none" stroke="#777" stroke-width="3" stroke-linejoin="round"><path d="M34 3V33Q34 35 32 34L4 20Q1 18 4 16L32 2Q34 1 34 3Z" /></svg>
          </button>
        </div>
      </footer>
    `;
  }
}
